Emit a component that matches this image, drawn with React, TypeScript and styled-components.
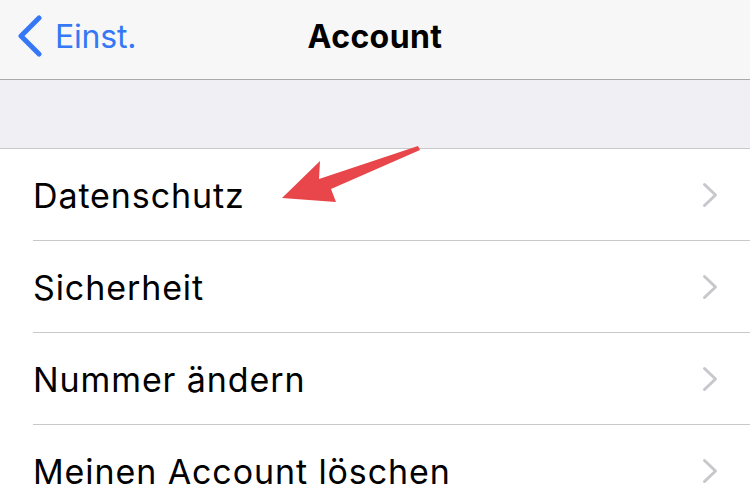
import styled, { createGlobalStyle } from "styled-components";

const GlobalStyle = createGlobalStyle`
    html, body {
        margin: 0;
        padding: 0;
        background: #ffffff;
        font-family: Inter, "Liberation Sans", sans-serif;
    }
`

const items = ["Datenschutz", "Sicherheit", "Nummer ändern", "Meinen Account löschen"];

function Chevron({ color, width, height, stroke }: { color: string; width: number; height: number; stroke: number }) {
    return (
        <svg width={width} height={height} viewBox={`0 0 ${width} ${height}`} fill="none">
            <polyline
                points={`${stroke / 2 + 1},${stroke / 2 + 1} ${width - stroke / 2 - 1},${height / 2} ${stroke / 2 + 1},${height - stroke / 2 - 1}`}
                stroke={color}
                strokeWidth={stroke}
                strokeLinecap="round"
                strokeLinejoin="round"
            />
        </svg>
    );
}

export default function App() {
    return (
        <>
            <GlobalStyle />
            <Screen>
                <NavBar>
                    <BackButton>
                        <BackIcon>
                            <svg width="27" height="42" viewBox="0 0 27 42" fill="none">
                                <polyline points="23,3 5,21 23,39" stroke="#3478f6" strokeWidth="5" strokeLinecap="round" strokeLinejoin="round" />
                            </svg>
                        </BackIcon>
                        <BackLabel>Einst.</BackLabel>
                    </BackButton>
                    <Title>Account</Title>
                </NavBar>
                <GroupSpacer />
                <List>
                    {items.map((label) => (
                        <Row key={label}>
                            <RowLabel>{label}</RowLabel>
                            <Chevron color="#c7c7cc" width={16} height={26} stroke={3} />
                        </Row>
                    ))}
                </List>
                <Arrow width="750" height="500" viewBox="0 0 750 500">
                    <polygon
                        points="418,146 420,150 331,189 336,202 282,198 320,161 319,179"
                        fill="#e8464a"
                        strokeLinejoin="round"
                    />
                </Arrow>
            </Screen>
        </>
    )
}

const Screen = styled.div`
    position: relative;
    width: 750px;
    height: 500px;
    overflow: hidden;
    background: #ffffff;
`

const NavBar = styled.header`
    position: relative;
    height: 79px;
    background: #f7f7f7;
    border-bottom: 1px solid #a9a9ac;
    display: flex;
    align-items: center;
    justify-content: center;
`

const BackButton = styled.div`
    position: absolute;
    left: 16px;
    top: 0;
    height: 100%;
    display: flex;
    align-items: center;
    gap: 12px;
    color: #3478f6;
`

const BackIcon = styled.span`
    display: flex;
    margin-top: -7px;
`

const BackLabel = styled.span`
    font-size: 32px;
    letter-spacing: -0.2px;
    margin-top: -6px;
`

const Title = styled.h1`
    margin: -6px 0 0;
    font-size: 32px;
    font-weight: 700;
    color: #000;
    letter-spacing: 0.4px;
`

const GroupSpacer = styled.div`
    height: 68px;
    background: #efeff4;
    border-bottom: 1px solid #c8c7cc;
`

const List = styled.ul`
    list-style: none;
    margin: 0;
    padding: 0 0 0 33px;
`

const Row = styled.li`
    height: 91px;
    display: flex;
    align-items: center;
    justify-content: space-between;
    padding-right: 32px;
    border-bottom: 1px solid #c8c7cc;
`

const RowLabel = styled.span`
    font-size: 34px;
    color: #000;
    letter-spacing: 0.9px;
    margin-top: 2px;
`

const Arrow = styled.svg`
    position: absolute;
    left: 0;
    top: 0;
    pointer-events: none;
`
